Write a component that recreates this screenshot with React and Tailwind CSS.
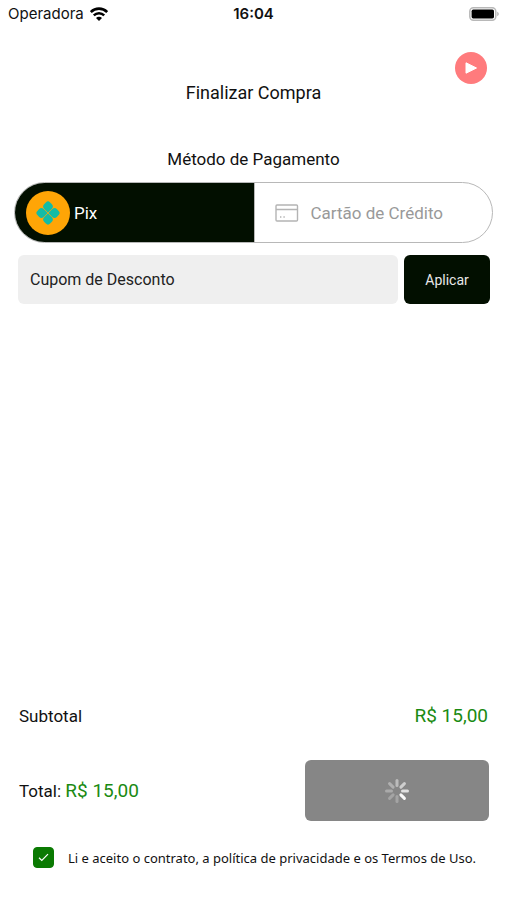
import React, { useState } from 'react';

const WifiIcon = () => (
    <svg width="18" height="14" viewBox="0 0 18 14" fill="none" aria-hidden="true">
        <path d="M.8 5a11.600 11.600 0 0 1 16.400 0" stroke="#000" strokeWidth="2.600" />
        <path d="M3.800 8.400a7.300 7.300 0 0 1 10.400 0" stroke="#000" strokeWidth="2.400" />
        <path d="M9 14 6 11a4.200 4.200 0 0 1 6 0z" fill="#000" />
    </svg>
);

const BatteryIcon = () => (
    <svg width="30" height="14" viewBox="0 0 30 14" aria-hidden="true">
        <rect x="0.8" y="0.8" width="26" height="12.400" rx="3.600" fill="#fff" stroke="#b8b8b8" strokeWidth="1.500" />
        <rect x="2.600" y="2.600" width="22.400" height="8.800" rx="1.600" fill="#000" />
        <path d="M28.200 4.800c1 .4 1.600 1.200 1.600 2.200s-.6 1.800-1.600 2.200z" fill="#b8b8b8" />
    </svg>
);

const PixIcon = () => (
    <svg width="24" height="24" viewBox="0 0 24 24" aria-hidden="true">
        <g transform="rotate(45 12 12)" fill="#12bca6">
            <path d="M11.700 11.700H6.500A3.500 3.500 0 0 1 3 8.200V6a3 3 0 0 1 3-3h2.200a3.500 3.500 0 0 1 3.500 3.500z" />
            <path d="M12.300 11.700V6.500A3.500 3.500 0 0 1 15.800 3H18a3 3 0 0 1 3 3v2.200a3.500 3.500 0 0 1-3.500 3.500z" />
            <path d="M11.700 12.300v5.200A3.500 3.500 0 0 1 8.200 21H6a3 3 0 0 1-3-3v-2.200a3.500 3.500 0 0 1 3.500-3.500z" />
            <path d="M12.300 12.300h5.200a3.500 3.500 0 0 1 3.500 3.500V18a3 3 0 0 1-3 3h-2.200a3.500 3.500 0 0 1-3.500-3.500z" />
        </g>
    </svg>
);

const CardIcon = () => (
    <svg width="24" height="18" viewBox="0 0 24 18" fill="none" stroke="#b4b4b4" aria-hidden="true">
        <rect x="1" y="1" width="21.500" height="16" rx="1" strokeWidth="1.400" />
        <path d="M1 5.500h21.500" strokeWidth="1.600" />
        <path d="M5 13h1.400M8.400 13h1.400" strokeWidth="1.400" />
    </svg>
);

// opacity of each spoke, clockwise from the top
const spokes = [0.45, 0.6, 0.75, 0.95, 0.25, 0.25, 0.3, 0.35];

const Spinner = () => (
    <svg width="24" height="24" viewBox="0 0 24 24" aria-hidden="true">
        {spokes.map((opacity, i) => (
            <rect
                key={i}
                x="10.500"
                y="0"
                width="3"
                height="8"
                rx="1.500"
                fill="#fff"
                opacity={opacity}
                transform={`rotate(${i * 45} 12 12)`}
            />
        ))}
    </svg>
);

const App = () => {
    const [method, setMethod] = useState('pix');
    const [coupon, setCoupon] = useState('');
    const [accepted, setAccepted] = useState(true);

    return (
        <div className="relative flex min-h-screen flex-col bg-white font-['Roboto',sans-serif] text-[17px] leading-7 text-[#111]">
            <div className="grid h-7 grid-cols-3 items-center px-2 font-['Inter',sans-serif] text-[15px]">
                <div className="flex items-center gap-1.5">
                    <span>Operadora</span>
                    <WifiIcon />
                </div>
                <span className="text-center font-semibold">16:04</span>
                <div className="flex justify-end">
                    <BatteryIcon />
                </div>
            </div>

            <button
                aria-label="Assistir vídeo"
                className="absolute right-5 top-13 flex h-8 w-8 items-center justify-center rounded-full bg-[#ff7b7d]"
            >
                <svg width="12" height="12" viewBox="0 0 12 12" aria-hidden="true">
                    <path d="M1 .8v10.400L11.500 6z" fill="#fff" stroke="#fff" strokeWidth="1" strokeLinejoin="round" />
                </svg>
            </button>

            <h1 className="mt-[51px] text-center text-lg leading-7">Finalizar Compra</h1>
            <h2 className="mt-[38px] text-center">Método de Pagamento</h2>

            <div className="mx-3.5 mt-[9px] flex h-[61px] overflow-hidden rounded-full border border-[#b8b8b8]">
                <button
                    onClick={() => setMethod('pix')}
                    aria-pressed={method === 'pix'}
                    className="flex w-1/2 items-center gap-1 bg-[#020f00] pl-[11px] text-white"
                >
                    <span className="flex h-11 w-11 items-center justify-center rounded-full bg-[#ffa506]">
                        <PixIcon />
                    </span>
                    Pix
                </button>
                <button
                    onClick={() => setMethod('card')}
                    aria-pressed={method === 'card'}
                    className="flex w-1/2 items-center gap-3 border-l border-[#b8b8b8] pl-5 text-[#999]"
                >
                    <CardIcon />
                    Cartão de Crédito
                </button>
            </div>

            <div className="ml-[18px] mr-[17px] mt-3 flex h-[49px] gap-1.5">
                <input
                    type="text"
                    aria-label="Cupom de Desconto"
                    placeholder="Cupom de Desconto"
                    value={coupon}
                    onChange={(e) => setCoupon(e.target.value)}
                    className="min-w-0 flex-1 rounded-md bg-[#efefef] px-3 text-base placeholder:text-[#222]"
                />
                <button className="w-[86px] rounded-md bg-[#020f00] text-sm text-[#e8e8e8]">Aplicar</button>
            </div>

            <div className="mt-auto flex items-center justify-between px-[19px]">
                <span>Subtotal</span>
                <span className="text-[19px] text-[#1a8a12]">R$ 15,00</span>
            </div>

            <div className="mt-[30px] flex items-center justify-between pl-[19px] pr-[18px]">
                <p>
                    Total: <span className="text-[19px] text-[#1a8a12]">R$ 15,00</span>
                </p>
                <button
                    aria-label="Processando"
                    className="flex h-[61px] w-[184px] items-center justify-center rounded-md bg-[#868686]"
                >
                    <Spinner />
                </button>
            </div>

            <label className="mt-[26px] mb-8 flex items-center gap-3.5 pl-[33px] font-['Noto_Sans',sans-serif] text-[13px] leading-5">
                <span className="grid h-[21px] w-[21px] place-items-center">
                    <input
                        type="checkbox"
                        checked={accepted}
                        onChange={(e) => setAccepted(e.target.checked)}
                        className="col-start-1 row-start-1 h-[21px] w-[21px] appearance-none rounded-sm border border-[#0a7a02] checked:bg-[#0a7a02]"
                    />
                    {accepted && (
                        <svg className="pointer-events-none col-start-1 row-start-1" width="11" height="9" viewBox="0 0 11 9" fill="none" aria-hidden="true">
                            <path d="M1 4.800 3.800 7.500 10 1.200" stroke="#fff" strokeWidth="1.200" />
                        </svg>
                    )}
                </span>
                Li e aceito o contrato, a política de privacidade e os Termos de Uso.
            </label>
        </div>
    );
};

export default App;
